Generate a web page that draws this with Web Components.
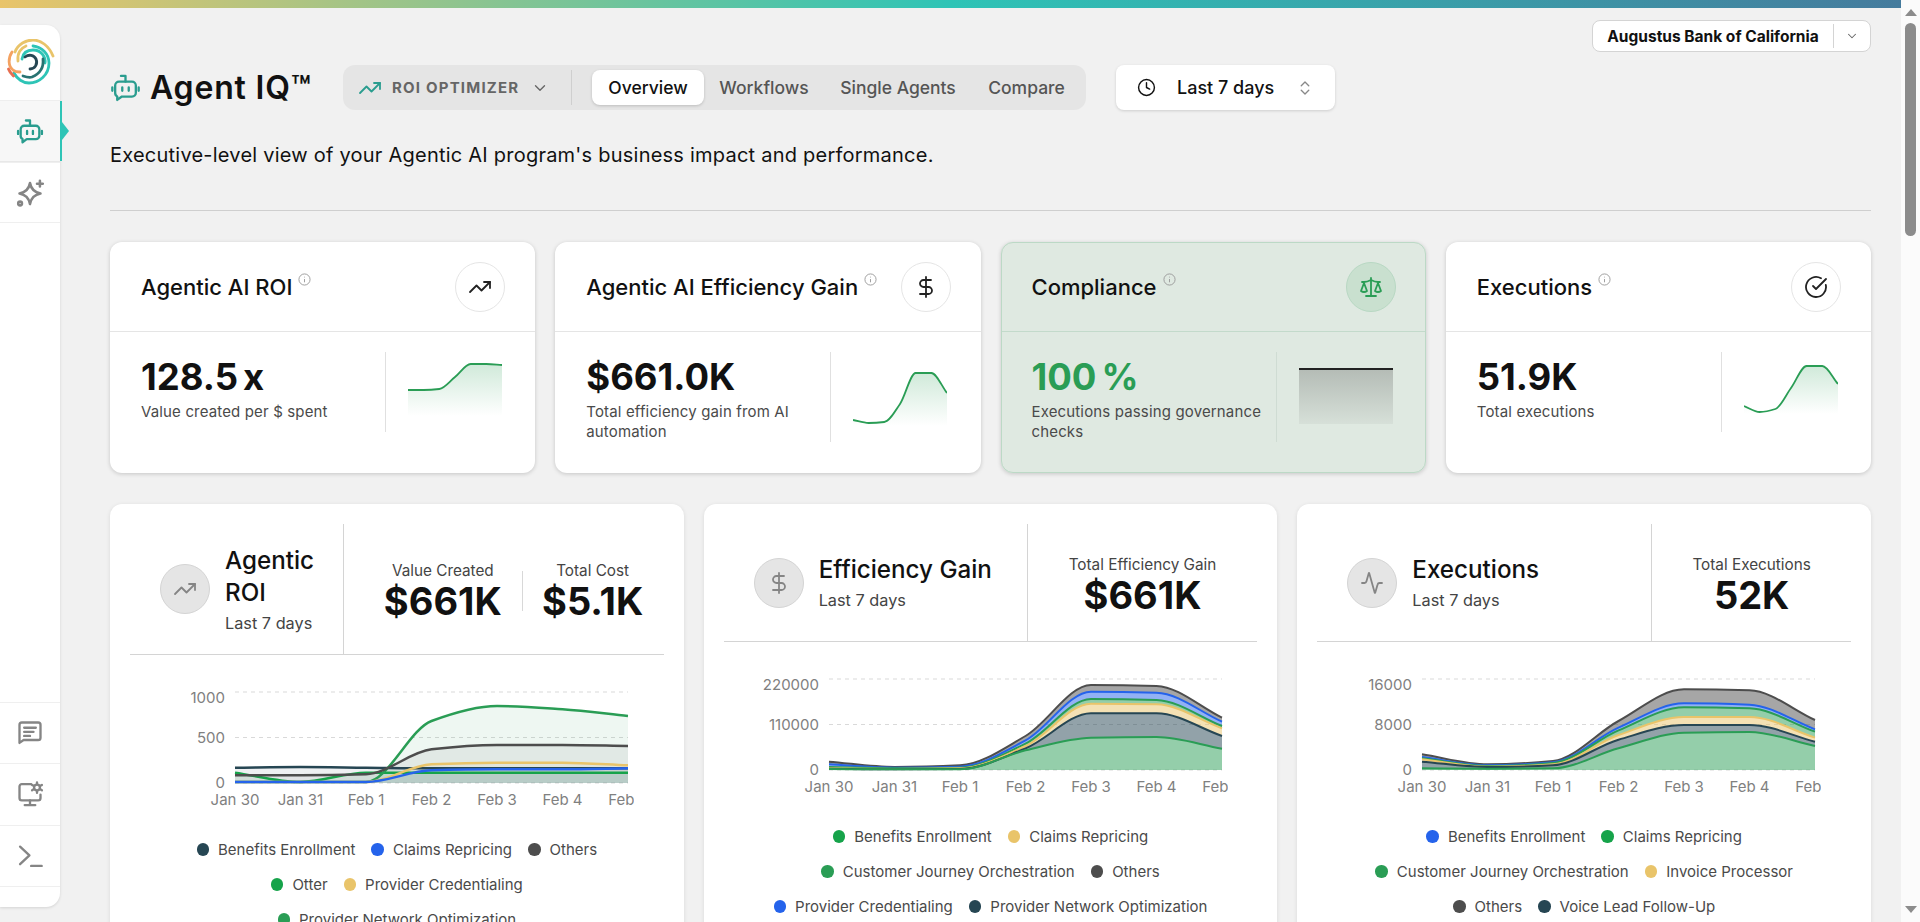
<!DOCTYPE html>
<html lang="en">
<head>
<meta charset="utf-8">
<title>Agent IQ</title>
<style>
  html, body { margin: 0; padding: 0; height: 922px; overflow: hidden; background: #f1f1f1; }
  body { font-family: Inter, "Noto Sans", sans-serif; color: #111; }
</style>
</head>
<body>
<agent-app>
  <side-nav slot="nav"></side-nav>
  <company-select slot="main">Augustus Bank of California</company-select>
  <page-header slot="main"></page-header>
  <kpi-row slot="main">
    <kpi-card heading="Agentic AI ROI" value="128.5" unit="x" sub="Value created per $ spent" icon="trend" spark="roi"></kpi-card>
    <kpi-card heading="Agentic AI Efficiency Gain" value="$661.0K" sub="Total efficiency gain from AI automation" icon="dollar" spark="gain"></kpi-card>
    <kpi-card heading="Compliance" value="100" unit="%" sub="Executions passing governance checks" icon="scale" spark="flat" tone="good"></kpi-card>
    <kpi-card heading="Executions" value="51.9K" sub="Total executions" icon="check" spark="exec"></kpi-card>
  </kpi-row>
  <chart-row slot="main">
    <chart-card heading="Agentic ROI" icon="trend" pane="214" head="130" chart="roi">
      <metric-box label="Value Created" value="$661K" style="padding-left:20px"></metric-box>
      <metric-box label="Total Cost" value="$5.1K" divided></metric-box>
    </chart-card>
    <chart-card heading="Efficiency Gain" icon="dollar" pane="304" head="117" chart="gain">
      <metric-box label="Total Efficiency Gain" value="$661K"></metric-box>
    </chart-card>
    <chart-card heading="Executions" icon="activity" pane="335" head="117" chart="exec">
      <metric-box label="Total Executions" value="52K"></metric-box>
    </chart-card>
  </chart-row>
  <fake-scrollbar slot="scroll"></fake-scrollbar>
</agent-app>

<script>
const ICONS = {
  robot: '<path d="M7 7.500h10a3 3 0 0 1 3 3v5.500a3 3 0 0 1-3 3H9.200L5.600 21.600V18.900A3 3 0 0 1 4 16v-5.500a3 3 0 0 1 3-3z"/><path d="M12 7.500V3H8.500"/><path d="M1.800 12v2.500M22.200 12v2.500M9.500 12v2.500M14.500 12v2.500"/>',
  sparkle: '<path d="M12 3.500c1 5.500 3.500 8 9 9-5.500 1-8 3.500-9 9-1-5.500-3.500-8-9-9 5.500-1 8-3.500 9-9z"/><path d="M20.500 1.500v5M18 4h5"/><circle cx="3.500" cy="21" r="1.600"/>',
  message: '<path d="M3 20.500V5a2 2 0 0 1 2-2h14a2 2 0 0 1 2 2v11a2 2 0 0 1-2 2H6.500z"/><path d="M7 7.500h10M7 11h8M7 14.500h5"/>',
  monitor: '<path d="M13 3.500H5a2 2 0 0 0-2 2v10a2 2 0 0 0 2 2h14a2 2 0 0 0 2-2v-3"/><path d="M12 17.500v4M7.500 21.500h9"/><circle cx="18" cy="6.500" r="2.500"/><path d="M18 2v1.500M18 9.500V11M13.800 4.200l1.300.8M20.900 8l1.300.8M13.800 8.800l1.300-.8M20.900 5l1.300-.8"/>',
  terminal: '<path d="M3.500 4l8 7.500-8 7.500M13 20.500h9"/>',
  trend: '<path d="M22 7l-8.500 8.500-5-5L2 17"/><path d="M16 7h6v6"/>',
  dollar: '<path d="M12 2v20"/><path d="M17 5H9.500a3.500 3.500 0 0 0 0 7h5a3.500 3.500 0 0 1 0 7H6"/>',
  scale: '<path d="M16 16l3-8 3 8c-.87.65-1.920 1-3 1s-2.130-.35-3-1z"/><path d="M2 16l3-8 3 8c-.87.65-1.920 1-3 1s-2.130-.35-3-1z"/><path d="M7 21h10M12 3v18M3 7h2c2 0 5-1 7-2 2 1 5 2 7 2h2"/>',
  check: '<path d="M21.800 10A10 10 0 1 1 17 3.340"/><path d="M9 11l3 3L22 4"/>',
  activity: '<path d="M22 12h-2.500a2 2 0 0 0-1.900 1.500l-2.400 8.300a.25.25 0 0 1-.48 0L9.240 2.200a.25.25 0 0 0-.48 0L6.400 10.500A2 2 0 0 1 4.500 12H2"/>',
  clock: '<circle cx="12" cy="12" r="10"/><path d="M12 6v6l4 2"/>',
  chevron: '<path d="M6 9l6 6 6-6"/>',
  updown: '<path d="M7 15l5 5 5-5M7 9l5-5 5 5"/>'
};
const icon = (name, size, color, sw = 2) =>
  `<svg width="${size}" height="${size}" viewBox="0 0 24 24" fill="none" stroke="${color}" stroke-width="${sw}" stroke-linecap="round" stroke-linejoin="round" style="display:block">${ICONS[name]}</svg>`;

// same curve the chart library draws with (monotone x)
function curve(pts) {
  const n = pts.length, m = [], s = [];
  for (let i = 0; i < n - 1; i++) s[i] = (pts[i + 1][1] - pts[i][1]) / (pts[i + 1][0] - pts[i][0]);
  m[0] = s[0]; m[n - 1] = s[n - 2];
  for (let i = 1; i < n - 1; i++) m[i] = s[i - 1] * s[i] <= 0 ? 0 : 2 * s[i - 1] * s[i] / (s[i - 1] + s[i]);
  let d = `${pts[0][0]} ${pts[0][1]}`;
  for (let i = 0; i < n - 1; i++) {
    const h = (pts[i + 1][0] - pts[i][0]) / 3;
    d += ` C${pts[i][0] + h} ${pts[i][1] + m[i] * h} ${pts[i + 1][0] - h} ${pts[i + 1][1] - m[i + 1] * h} ${pts[i + 1][0]} ${pts[i + 1][1]}`;
  }
  return d;
}
// backwards version of the same curve, to close a band between two series
function band(top, bottom) {
  const rev = curve([...bottom].reverse());
  return `M${curve(top)} L${rev} Z`;
}

const COL = { navy: '#264653', blue: '#2563eb', grey: '#4d4d4d', green: '#16a34a', green2: '#2a9d55', yellow: '#e9c46a' };

const CHARTS = {
  roi: {
    kind: 'line', off: 174, ticks: ['1000', '500', '0'],
    series: [
      [COL.navy, [800, 798, 800, 802, 802, 802, 802]],
      [COL.green, [815, 843, 815, 815, 815, 815, 815]],
      [COL.green2, [843, 843, 843, 660, 615, 625, 645]],
      [COL.grey, [823, 823, 820, 745, 732, 732, 735]],
      [COL.yellow, [843, 843, 843, 790, 785, 785, 793]],
      [COL.blue, [843, 843, 843, 808, 805, 805, 802]]
    ],
    legend: [
      [['Benefits Enrollment', COL.navy], ['Claims Repricing', COL.blue], ['Others', COL.grey]],
      [['Otter', COL.green], ['Provider Credentialing', COL.yellow]],
      [['Provider Network Optimization', COL.green2]]
    ]
  },
  gain: {
    kind: 'stack', off: 161, ticks: ['220000', '110000', '0'],
    series: [
      [COL.grey, [782, 798, 793, 705, 552, 555, 650]],
      [COL.blue, [790, 800, 797, 718, 572, 575, 662]],
      [COL.green2, [798, 802, 800, 728, 594, 597, 675]],
      [COL.yellow, [802, 804, 802, 735, 608, 610, 682]],
      [COL.navy, [803, 805, 804, 742, 637, 637, 705]],
      [COL.green2, [804, 805, 805, 748, 710, 708, 743]]
    ],
    legend: [
      [['Benefits Enrollment', COL.green], ['Claims Repricing', COL.yellow]],
      [['Customer Journey Orchestration', COL.green2], ['Others', COL.grey]],
      [['Provider Credentialing', COL.blue], ['Provider Network Optimization', COL.navy]]
    ]
  },
  exec: {
    kind: 'stack', off: 161, ticks: ['16000', '8000', '0'],
    series: [
      [COL.grey, [760, 790, 780, 660, 565, 568, 657]],
      [COL.blue, [768, 793, 784, 680, 607, 611, 685]],
      [COL.green2, [772, 795, 786, 688, 619, 622, 692]],
      [COL.yellow, [775, 797, 790, 702, 648, 648, 710]],
      [COL.navy, [782, 798, 793, 716, 672, 672, 722]],
      [COL.green2, [802, 803, 802, 742, 695, 693, 735]]
    ],
    legend: [
      [['Benefits Enrollment', COL.blue], ['Claims Repricing', COL.green]],
      [['Customer Journey Orchestration', COL.green2], ['Invoice Processor', COL.yellow]],
      [['Others', COL.grey], ['Voice Lead Follow-Up', COL.navy]]
    ]
  }
};

const SPARKS = {
  roi: { y: [38, 38, 37, 25, 12, 12, 13], base: 64, line: '#2a9d55', top: '#2a9d55', op: .22, end: 0 },
  gain: { y: [68, 71, 70, 52, 21, 21, 41], base: 74, line: '#2a9d55', top: '#2a9d55', op: .22, end: 0 },
  flat: { y: [17, 17, 17, 17, 17, 17, 17], base: 72, line: '#222', top: '#333', op: .25, end: .05 },
  exec: { y: [54, 60, 57, 36, 14, 14, 32], base: 62, line: '#2a9d55', top: '#2a9d55', op: .22, end: 0 }
};

class AgentApp extends HTMLElement {
  constructor() {
    super();
    this.attachShadow({ mode: 'open' }).innerHTML = `
    <style>
      :host { display: grid; grid-template-columns: 1fr 19px; width: 1920px; height: 922px; overflow: hidden; background: #f1f1f1; }
      .left { display: flex; flex-direction: column; min-width: 0; height: 922px; }
      .bar { height: 8px; flex: none; background: linear-gradient(90deg, #e9c46a 0%, #2ec4b6 50%, #457b9d 100%); }
      .under { flex: 1; display: flex; min-height: 0; }
      .main { flex: 1; min-width: 0; padding: 12px 30px 0 50px; overflow: hidden; }
    </style>
    <div class="left">
      <div class="bar"></div>
      <div class="under">
        <slot name="nav"></slot>
        <div class="main"><slot name="main"></slot></div>
      </div>
    </div>
    <slot name="scroll"></slot>`;
  }
}

class SideNav extends HTMLElement {
  constructor() {
    super();
    const c = '#858585';
    this.attachShadow({ mode: 'open' }).innerHTML = `
    <style>
      :host { display: flex; flex-direction: column; justify-content: space-between; flex: none; width: 60px; height: 882px; margin-top: 17px; background: #fff; border-radius: 0 14px 14px 0; box-shadow: 0 1px 3px rgba(0,0,0,.12); position: relative; }
      .logo { height: 75px; display: flex; align-items: center; justify-content: center; }
      .item { height: 60px; display: flex; align-items: center; justify-content: center; border-top: 1px solid #efefef; box-sizing: border-box; }
      .sel { height: 62px; background: #f7f7f7; border-top: 1px solid #eee; border-bottom: 1px solid #e8e8e8; position: relative; }
      .sel::before { content: ""; position: absolute; left: 60px; top: 0; bottom: 0; width: 2px; background: #2ec4b6; }
      .sel::after { content: ""; position: absolute; left: 62px; top: 21px; border-left: 7px solid #2ec4b6; border-top: 9px solid transparent; border-bottom: 9px solid transparent; }
      .low .item { height: 61.500px; }
      .tail { height: 20px; border-top: 1px solid #efefef; }
    </style>
    <div>
      <div class="logo">
        <svg width="48" height="48" viewBox="0 0 48 48" fill="none" stroke-width="2.800" stroke-linecap="round" style="margin-left:2px">
          <path d="M8 13C11 5 19 1 26 1c8 0 16 6 20 16" stroke="#e9c46a"/>
          <path d="M11 22c-1-8 3-13 8-15" stroke="#e9c46a"/>
          <path d="M26 7c9 1 16 8 16 17 0 12-10 20-20 20-6 0-12-4-15-10" stroke="#2ec4b6"/>
          <path d="M15 20c1-6 5-9 11-9 9 0 13 8 12 13" stroke="#2ec4b6"/>
          <path d="M36 20c1 9-4 15-11 18-3 1-6 0-9-1" stroke="#287271"/>
          <path d="M18 18c4-3 9-2 11 2 2 5-1 10-6 10" stroke="#264653"/>
          <path d="M5 13C1 19 1 27 6 31c2 2 5 2 7 2" stroke="#f4a261"/>
          <path d="M1.500 30c1 3 3 5 5 7" stroke="#e76f51"/>
        </svg>
      </div>
      <div class="item sel">${icon('robot', 28, '#2a9d8f')}</div>
      <div class="item">${icon('sparkle', 28, c, 2.200)}</div>
      <div class="item" style="height:1px"></div>
    </div>
    <div class="low">
      <div class="item">${icon('message', 28, c)}</div>
      <div class="item">${icon('monitor', 28, c)}</div>
      <div class="item">${icon('terminal', 28, c)}</div>
      <div class="tail"></div>
    </div>`;
  }
}

class CompanySelect extends HTMLElement {
  constructor() {
    super();
    this.attachShadow({ mode: 'open' }).innerHTML = `
    <style>
      :host { display: flex; width: 279px; height: 32px; box-sizing: border-box; margin-left: auto; background: #fff; border: 1px solid #d4d4d4; border-radius: 8px; align-items: center; font-size: 15.500px; font-weight: 700; color: #111; }
      .name { flex: 1; text-align: center; white-space: nowrap; }
      .btn { width: 36px; height: 24px; border-left: 1px solid #d4d4d4; display: flex; align-items: center; justify-content: center; }
    </style>
    <div class="name"><slot></slot></div>
    <div class="btn">${icon('chevron', 14, '#666', 1.800)}</div>`;
  }
}

class PageHeader extends HTMLElement {
  constructor() {
    super();
    this.attachShadow({ mode: 'open' }).innerHTML = `
    <style>
      :host { display: block; margin-top: 13px; }
      .row { display: flex; align-items: center; height: 45px; }
      .title { display: flex; align-items: center; gap: 9px; width: 233px; flex: none; font-size: 32px; letter-spacing: .8px; font-weight: 600; color: #111; white-space: nowrap; }
      .pill { display: flex; align-items: center; height: 45px; width: 743px; box-sizing: border-box; background: #e5e5e5; border-radius: 12px; flex: none; }
      .opt { display: flex; align-items: center; width: 228px; flex: none; padding-left: 15px; box-sizing: border-box; gap: 10px; font-size: 15px; font-weight: 700; letter-spacing: 1.200px; color: #666; white-space: nowrap; }
      .opt svg:last-child { margin-left: 2px; }
      .sep { width: 1px; height: 35px; background: #cfcfcf; flex: none; margin-right: 20px; }
      .tab { text-align: center; font-size: 17.500px; font-weight: 500; color: #555; flex: none; white-space: nowrap; }
      .tab.on { height: 35px; line-height: 35px; width: 112px; background: #fff; color: #111; border-radius: 8px; box-shadow: 0 1px 3px rgba(0,0,0,.18); }
      .date { display: flex; align-items: center; width: 219px; height: 45px; margin-left: 30px; background: #fff; border-radius: 8px; box-shadow: 0 1px 3px rgba(0,0,0,.15); font-size: 18px; font-weight: 500; box-sizing: border-box; padding-left: 21px; color: #111; white-space: nowrap; }
      .date span { width: 119px; margin-left: 21px; }
      p { margin: 33px 0 0; font-size: 20px; letter-spacing: .23px; line-height: 24px; color: #111; height: 67px; }
      hr { border: 0; height: 1px; background: #cfcfcf; margin: 0; }
    </style>
    <div class="row">
      <div class="title">${icon('robot', 31, '#2a9d8f', 1.800)}<span>Agent IQ™</span></div>
      <div class="pill">
        <div class="opt">${icon('trend', 24, '#2a9d8f', 1.800)}<span>ROI OPTIMIZER</span>${icon('chevron', 18, '#666', 1.800)}</div>
        <div class="sep"></div>
        <div class="tab on">Overview</div>
        <div class="tab" style="width:120px">Workflows</div>
        <div class="tab" style="width:148px">Single Agents</div>
        <div class="tab" style="width:109px">Compare</div>
      </div>
      <div class="date">${icon('clock', 19, '#111', 1.800)}<span>Last 7 days</span>${icon('updown', 18, '#888', 1.800)}</div>
    </div>
    <p>Executive-level view of your Agentic AI program's business impact and performance.</p>
    <hr>`;
  }
}

class KpiRow extends HTMLElement {
  constructor() {
    super();
    this.attachShadow({ mode: 'open' }).innerHTML = `
    <style>:host { display: grid; grid-template-columns: repeat(4, 1fr); gap: 20px; margin-top: 31px; }</style>
    <slot></slot>`;
  }
}

class KpiCard extends HTMLElement {
  connectedCallback() {
    if (this.shadowRoot) return;
    const good = this.getAttribute('tone') === 'good';
    const s = SPARKS[this.getAttribute('spark')];
    const pts = s.y.map((y, i) => [i * 94 / 6, y]);
    const id = 'g' + this.getAttribute('spark');
    const unit = this.getAttribute('unit');
    this.attachShadow({ mode: 'open' }).innerHTML = `
    <style>
      :host { display: block; height: 231px; box-sizing: border-box; background: ${good ? '#dfe9e1' : '#fff'}; border-radius: 12px; box-shadow: 0 1px 4px rgba(0,0,0,.18); ${good ? 'outline: 1px solid #bcd9c6; outline-offset: -1px;' : ''} }
      .head { display: flex; align-items: center; height: 90px; box-sizing: border-box; padding: 0 30px 0 31px; border-bottom: 1px solid ${good ? '#c3dacb' : '#e5e5e5'}; }
      h3 { margin: 0; font-size: 22px; font-weight: 500; color: #111; white-space: nowrap; }
      .info { margin: -14px 0 0 6px; width: 13px; height: 13px; flex: none; }
      .circle { margin-left: auto; width: 50px; height: 50px; box-sizing: border-box; flex: none; border-radius: 50%; border: 1px solid ${good ? '#b8d8c3' : '#e5e5e5'}; background: ${good ? '#c9e0cf' : 'transparent'}; display: flex; align-items: center; justify-content: center; }
      .body { display: flex; padding: 20px 0 0 31px; align-items: flex-start; }
      .text { width: 244px; flex: none; box-sizing: border-box; padding-right: 8px; }
      .val { height: 50px; line-height: 50px; font-size: 36.500px; font-weight: 700; color: ${good ? '#2a9d55' : '#111'}; white-space: nowrap; }
      .val i { font-style: normal; margin-left: 5px; }
      .sub { font-size: 15px; letter-spacing: .15px; line-height: 20px; color: #4a4a4a; }
      .rule { width: 1px; align-self: stretch; background: ${good ? '#cfdcd3' : '#e0e0e0'}; flex: none; margin-right: 22px; }
      svg.spark { display: block; flex: none; }
    </style>
    <div class="head">
      <h3>${this.getAttribute('heading')}</h3>
      <svg class="info" viewBox="0 0 14 14" fill="none" stroke="#999" stroke-width="1"><circle cx="7" cy="7" r="6"/><path d="M7 6.500v3.500M7 4v.8"/></svg>
      <div class="circle">${icon(this.getAttribute('icon'), 24, good ? '#2a9d55' : '#222', 1.800)}</div>
    </div>
    <div class="body">
      <div class="text">
        <div class="val">${this.getAttribute('value')}${unit ? `<i>${unit}</i>` : ''}</div>
        <div class="sub">${this.getAttribute('sub')}</div>
      </div>
      <div class="rule"></div>
      <svg class="spark" width="94" height="80" viewBox="0 0 94 80">
        <defs><linearGradient id="${id}" x1="0" y1="${Math.min(...s.y)}" x2="0" y2="${s.base}" gradientUnits="userSpaceOnUse"><stop offset="0" stop-color="${s.top}" stop-opacity="${s.op}"/><stop offset="1" stop-color="${s.top}" stop-opacity="${s.end}"/></linearGradient></defs>
        <path d="M${curve(pts)} L94 ${s.base} L0 ${s.base} Z" fill="url(#${id})"/>
        <path d="M${curve(pts)}" fill="none" stroke="${s.line}" stroke-width="1.800"/>
      </svg>
    </div>`;
  }
}

class ChartRow extends HTMLElement {
  constructor() {
    super();
    this.attachShadow({ mode: 'open' }).innerHTML = `
    <style>:host { display: grid; grid-template-columns: repeat(3, 1fr); gap: 20px; margin-top: 31px; }</style>
    <slot></slot>`;
  }
}

class MetricBox extends HTMLElement {
  connectedCallback() {
    if (this.shadowRoot) return;
    const d = this.hasAttribute('divided');
    this.attachShadow({ mode: 'open' }).innerHTML = `
    <style>
      :host { display: block; box-sizing: border-box; text-align: center; position: relative; flex: ${d ? '0 0 142px' : '1'}; }
      .l { font-size: 15.300px; line-height: 20px; color: #444; white-space: nowrap; }
      .v { font-size: 38px; line-height: 40px; font-weight: 700; color: #111; white-space: nowrap; }
      .rule { position: absolute; left: 0; top: 10px; bottom: 10px; width: 1px; background: #d8d8d8; }
    </style>
    ${d ? '<div class="rule"></div>' : ''}
    <div class="l">${this.getAttribute('label')}</div>
    <div class="v">${this.getAttribute('value')}</div>`;
  }
}

class StackChart extends HTMLElement {
  constructor() {
    super();
    this.attachShadow({ mode: 'open' });
  }
  set spec(c) {
    const xs = i => 105 + i * 65.500, base = 108;
    const toPts = z => z.map((v, i) => [xs(i), Math.min(v / 3 - c.off, base)]);
    const basePts = [0, 1, 2, 3, 4, 5, 6].map(i => [xs(i), base]);
    let shapes = '';
    if (c.kind === 'line') {
      c.series.forEach(([col, z]) => {
        shapes += `<path d="${band(toPts(z), basePts)}" fill="${col}" fill-opacity=".08"/>`;
      });
      c.series.forEach(([col, z]) => {
        shapes += `<path d="M${curve(toPts(z))}" fill="none" stroke="${col}" stroke-width="2.500"/>`;
      });
    } else {
      c.series.forEach(([col, z], i) => {
        const next = c.series[i + 1] ? toPts(c.series[i + 1][1]) : basePts;
        shapes += `<path d="${band(toPts(z), next)}" fill="${col}" fill-opacity=".5"/>`;
      });
      c.series.forEach(([col, z]) => {
        shapes += `<path d="M${curve(toPts(z))}" fill="none" stroke="${col}" stroke-width="2"/>`;
      });
    }
    const grid = [17, 62.500, 108].map((y, i) => `
      <line x1="105" x2="498" y1="${y}" y2="${y}" stroke="#d9d9d9" stroke-dasharray="4 4"/>
      <text x="95" y="${[28, 68, 113][i]}" text-anchor="end">${c.ticks[i]}</text>`).join('');
    const days = ['Jan 30', 'Jan 31', 'Feb 1', 'Feb 2', 'Feb 3', 'Feb 4', 'Feb 5'];
    const labels = days.map((d, i) => `<text x="${xs(i)}" y="130" text-anchor="middle">${d}</text>`).join('');
    const legend = c.legend.map(r => `<div class="row">${r.map(([t, col]) => `<span class="it"><b style="background:${col}"></b>${t}</span>`).join('')}</div>`).join('');
    this.shadowRoot.innerHTML = `
    <style>
      :host { display: block; }
      svg { display: block; font-size: 15px; }
      text { fill: #808080; }
      .legend { margin-top: 16px; }
      .row { display: flex; justify-content: center; align-items: center; gap: 16px; height: 35px; font-size: 15px; color: #4a4a4a; white-space: nowrap; }
      .it { display: flex; align-items: center; gap: 9px; }
      b { display: block; width: 12.500px; height: 12.500px; border-radius: 50%; }
    </style>
    <svg width="504" height="141" viewBox="0 0 504 141">${grid}${shapes}${labels}</svg>
    <div class="legend">${legend}</div>`;
  }
}

class ChartCard extends HTMLElement {
  connectedCallback() {
    if (this.shadowRoot) return;
    const pane = this.getAttribute('pane'), head = this.getAttribute('head');
    this.attachShadow({ mode: 'open' }).innerHTML = `
    <style>
      :host { display: block; height: 500px; background: #fff; border-radius: 12px; box-shadow: 0 1px 4px rgba(0,0,0,.1); padding: 20px; box-sizing: border-box; }
      .head { display: flex; height: ${head}px; border-bottom: 1px solid #d4d4d4; }
      .left { display: flex; align-items: center; gap: 15px; width: ${pane}px; flex: none; box-sizing: border-box; padding-left: 30px; border-right: 1px solid #d4d4d4; }
      .circle { width: 50px; height: 50px; flex: none; border-radius: 50%; box-sizing: border-box; border: 1px solid #d4d4d4; background: #e5e5e5; display: flex; align-items: center; justify-content: center; }
      .txt { padding-top: 3px; }
      h3 { margin: 0; font-size: 24.200px; line-height: 32px; font-weight: 500; color: #111; }
      .sub { font-size: 16.300px; line-height: 28px; color: #444; }
      .right { flex: 1; display: flex; align-items: center; justify-content: center; min-width: 0; padding-top: 4px; box-sizing: border-box; }
      .chart { margin-top: 20px; }
    </style>
    <div class="head">
      <div class="left">
        <div class="circle">${icon(this.getAttribute('icon'), 24, '#858585', 1.800)}</div>
        <div class="txt"><h3>${this.getAttribute('heading')}</h3><div class="sub">Last 7 days</div></div>
      </div>
      <div class="right"><slot></slot></div>
    </div>
    <div class="chart"><stack-chart></stack-chart></div>`;
    this.shadowRoot.querySelector('stack-chart').spec = CHARTS[this.getAttribute('chart')];
  }
}

class FakeScrollbar extends HTMLElement {
  constructor() {
    super();
    this.attachShadow({ mode: 'open' }).innerHTML = `
    <style>
      :host { display: flex; flex-direction: column; align-items: center; height: 922px; background: #fbfbfb; }
      .up, .down { width: 0; height: 0; border-left: 6px solid transparent; border-right: 6px solid transparent; flex: none; }
      .up { border-bottom: 7px solid #8c8c8c; margin-top: 9px; }
      .down { border-top: 7px solid #8c8c8c; margin-top: auto; margin-bottom: 9px; }
      .thumb { width: 11px; height: 213px; margin-top: 7px; background: #8c8c8c; border-radius: 6px; flex: none; }
    </style>
    <div class="up"></div><div class="thumb"></div><div class="down"></div>`;
  }
}

customElements.define('stack-chart', StackChart);
customElements.define('agent-app', AgentApp);
customElements.define('side-nav', SideNav);
customElements.define('company-select', CompanySelect);
customElements.define('page-header', PageHeader);
customElements.define('kpi-row', KpiRow);
customElements.define('kpi-card', KpiCard);
customElements.define('chart-row', ChartRow);
customElements.define('metric-box', MetricBox);
customElements.define('chart-card', ChartCard);
customElements.define('fake-scrollbar', FakeScrollbar);
</script>
</body>
</html>
